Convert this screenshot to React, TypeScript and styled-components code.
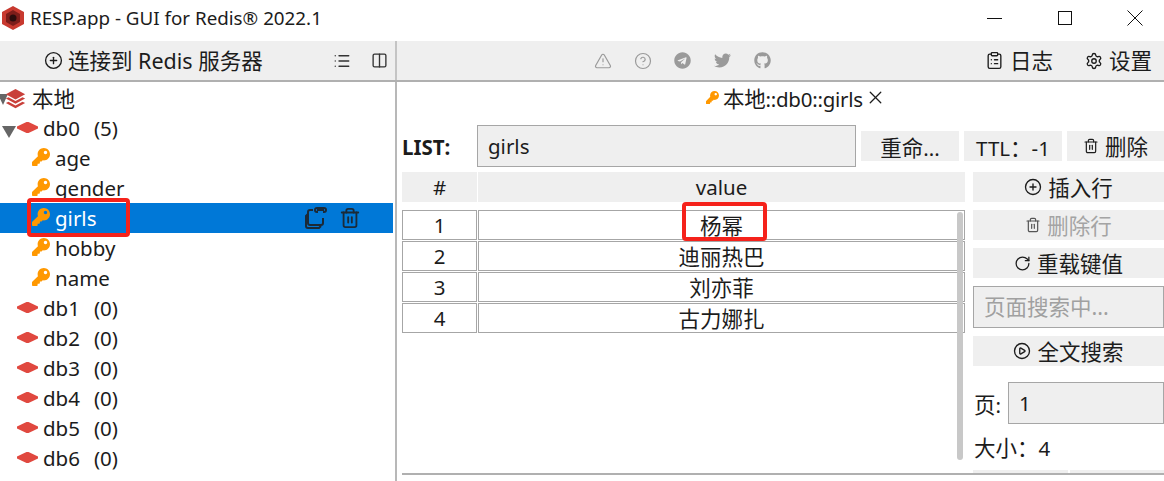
import React from 'react'
import styled, { createGlobalStyle } from 'styled-components'
import {
    CirclePlus,
    List,
    Columns2,
    TriangleAlert,
    CircleHelp,
    ClipboardList,
    Settings,
    Trash2,
    RotateCw,
    CirclePlay,
    X,
} from 'lucide-react'
import { FaGithub, FaKey, FaTelegram, FaTwitter } from 'react-icons/fa'

const FONT = `'Noto Sans', 'Noto Sans CJK SC', sans-serif`

const GlobalStyle = createGlobalStyle`
    html, body {
        margin: 0;
        padding: 0;
        background: #fff;
    }
    * {
        box-sizing: border-box;
    }
`

const Root = styled.div`
    display: flex;
    flex-direction: column;
    width: 1164px;
    height: 481px;
    overflow: hidden;
    font-family: ${FONT};
    font-size: 20.5px;
    color: #1c1c1c;
`

const Cjk = styled.span`
    font-size: 21.5px;
    padding-bottom: 2px;
`

const TitleBar = styled.div`
    display: flex;
    align-items: center;
    height: 41px;
    padding: 0 0 5px 2px;
`

const AppTitle = styled.span`
    margin-left: 6px;
    font-size: 18.8px;
    flex: 1;
`

const WinButton = styled.svg`
    width: 16px;
    height: 16px;
    margin-right: 54px;
    fill: none;
    stroke: #111;
    stroke-width: 1;
    &:last-child {
        margin-right: 21px;
    }
`

const Toolbar = styled.div`
    display: flex;
    height: 41px;
    background: #efefef;
    border-bottom: 2px solid #b0b0b0;
`

const ToolLeft = styled.div`
    display: flex;
    align-items: center;
    width: 397px;
    flex: none;
    padding-left: 44px;
    border-right: 2px solid #c4c4c4;
`

const ConnectLabel = styled.span`
    margin-left: 5px;
    width: 265px;
    padding-bottom: 2px;
    font-size: 21.5px;
    white-space: pre;
`

const ToolIcon = styled.span<{ $gap?: number; $muted?: boolean }>`
    display: inline-flex;
    margin-left: ${(p) => p.$gap ?? 0}px;
    color: ${(p) => (p.$muted ? '#9a9a9a' : '#333')};
`

const ToolRight = styled.div`
    display: flex;
    align-items: center;
    flex: 1;
    padding-left: 197px;
`

const ToolLink = styled.span<{ $gap: number }>`
    display: inline-flex;
    align-items: center;
    gap: 6px;
    margin-left: ${(p) => p.$gap}px;
`

const Body = styled.div`
    display: flex;
    flex: 1;
    min-height: 0;
`

const Sidebar = styled.div`
    width: 397px;
    flex: none;
    padding-top: 1px;
    overflow: hidden;
    border-right: 2px solid #b8b8b8;
`

const TreeRow = styled.div<{ $indent: number; $selected?: boolean }>`
    position: relative;
    display: flex;
    align-items: center;
    width: 393px;
    height: 30px;
    padding-left: ${(p) => p.$indent}px;
    white-space: pre;
    background: ${(p) => (p.$selected ? '#0078d7' : 'transparent')};
    color: ${(p) => (p.$selected ? '#fff' : 'inherit')};
`

const DbCount = styled.span`
    margin-left: 14px;
`

const Arrow = styled.i<{ $left: number; $top: number; $size: number; $height: number }>`
    position: absolute;
    left: ${(p) => p.$left}px;
    top: ${(p) => p.$top}px;
    border-left: ${(p) => p.$size}px solid transparent;
    border-right: ${(p) => p.$size}px solid transparent;
    border-top: ${(p) => p.$height}px solid #666;
`

const KeyIcon = styled(FaKey)<{ $size?: number }>`
    flex: none;
    color: #ff9800;
    width: ${(p) => p.$size ?? 18}px;
    height: ${(p) => p.$size ?? 18}px;
`

const TreeKey = styled(KeyIcon)`
    margin: -2px 5px 0 0;
`

const DbIcon = styled.svg`
    flex: none;
    width: 21px;
    height: 11px;
    margin: -2px 5px 0 0;
    fill: #e0483f;
`

const StackIcon = styled.svg`
    position: absolute;
    left: 5px;
    top: 5px;
    width: 21px;
    height: 21px;
    fill: #c9403a;
`

const RowActions = styled.span`
    display: flex;
    align-items: center;
    gap: 11px;
    margin-left: auto;
    padding-right: 32px;
    color: #1b2a38;
`

const Marker = styled.span`
    position: absolute;
    border: 4px solid #f5221b;
    border-radius: 4px;
    pointer-events: none;
`

const KeyMarker = styled(Marker)`
    left: 27px;
    top: -5px;
    width: 103px;
    height: 39px;
`

const CellMarker = styled(Marker)`
    left: 203px;
    top: -9px;
    width: 85px;
    height: 39px;
`

const Main = styled.div`
    display: flex;
    flex-direction: column;
    flex: 1;
    min-width: 0;
    padding: 0 0 6px 5px;
`

const TabRow = styled.div`
    display: flex;
    align-items: center;
    height: 43px;
    padding: 0 0 13px 304px;
    letter-spacing: -0.25px;
`

const TabText = styled.span`
    margin: 0 2px 0 4px;
`

const KeyRow = styled.div`
    display: flex;
    align-items: center;
    height: 42px;
`

const TypeLabel = styled.b`
    width: 75px;
    flex: none;
    padding-top: 2px;
    font-size: 20.5px;
`

const Field = styled.input<{ $width?: number }>`
    display: block;
    width: ${(p) => (p.$width ? `${p.$width}px` : '100%')};
    height: 42px;
    flex: none;
    padding: 0 0 0 10px;
    border: 1px solid #a6a6a6;
    border-radius: 0;
    outline: none;
    background: #efefef;
    color: #1c1c1c;
    font: 20.5px ${FONT};
    &::placeholder {
        color: #a0a0a0;
        opacity: 1;
        font-size: 21.5px;
    }
`

const Button = styled.div<{ $width?: number; $disabled?: boolean; $gap?: number }>`
    display: flex;
    align-items: center;
    justify-content: center;
    gap: 6px;
    flex: none;
    width: ${(p) => (p.$width ? `${p.$width}px` : '100%')};
    height: 30px;
    margin-left: ${(p) => p.$gap ?? 0}px;
    background: #efefef;
    white-space: nowrap;
    color: ${(p) => (p.$disabled ? '#a4a4a4' : 'inherit')};
`

const Content = styled.div`
    display: flex;
    flex: 1;
    min-height: 0;
    margin-top: 5px;
    border-bottom: 2px solid #b0b0b0;
`

const TablePane = styled.div`
    position: relative;
    width: 563px;
    flex: none;
    margin-right: 8px;
`

const TableRow = styled.div`
    display: grid;
    grid-template-columns: 75px 487px;
    gap: 1px;
    margin-bottom: 1px;
`

const HeadRow = styled(TableRow)`
    margin-bottom: 8px;
`

const HeadCell = styled.div`
    display: flex;
    align-items: center;
    justify-content: center;
    height: 30px;
    background: #efefef;
`

const Cell = styled.div`
    position: relative;
    display: flex;
    align-items: center;
    justify-content: center;
    height: 30px;
    border: 1px solid #a6a6a6;
`

const Scrollbar = styled.div`
    position: absolute;
    right: 2px;
    top: 40px;
    width: 6px;
    height: 248px;
    border-radius: 3px;
    background: #c8c8c8;
`

const SidePane = styled.div`
    display: flex;
    flex-direction: column;
    gap: 8px;
    flex: 1;
    min-width: 0;
    overflow: hidden;
`

const PageRow = styled.div`
    display: flex;
    align-items: center;
    justify-content: space-between;
    margin-top: 8px;
    padding-left: 1px;
`

const SizeRow = styled.div`
    display: flex;
    flex: none;
    align-items: center;
    height: 30px;
    margin-top: 1px;
    padding: 0 0 4px 1px;
`

const PeekRow = styled.div`
    display: flex;
    flex: none;
    gap: 2px;
    margin-top: -1px;
`

const PeekButton = styled.div`
    flex: 1;
    height: 30px;
    background: #efefef;
`

const dbs = ['db1', 'db2', 'db3', 'db4', 'db5', 'db6', 'db7']
const keys = ['age', 'gender', 'girls', 'hobby', 'name']
const values = ['杨幂', '迪丽热巴', '刘亦菲', '古力娜扎']

const DbGlyph = () => (
    <DbIcon viewBox="0 0 21 11">
        <path d="M9.5 0h2L21 4.5v2L11.5 11h-2L0 6.5v-2Z" />
    </DbIcon>
)

const App = () => {
    return (
        <Root>
            <GlobalStyle />
            <TitleBar>
                <svg width="22" height="24" viewBox="0 0 22 24">
                    <path d="M11 0 22 6v12l-11 6L0 18V6Z" fill="#c8392f" />
                    <path d="M11 4 18 8v8l-7 4-7-4V8Z" fill="#7d1d1a" />
                    <circle cx="11" cy="12" r="3.5" fill="#2c0d0d" />
                </svg>
                <AppTitle>RESP.app - GUI for Redis® 2022.1</AppTitle>
                <WinButton viewBox="0 0 16 16">
                    <path d="M0 8.5h15" />
                </WinButton>
                <WinButton viewBox="0 0 16 16">
                    <rect x="1.5" y="1.5" width="13" height="13" />
                </WinButton>
                <WinButton viewBox="0 0 16 16">
                    <path d="M.5.5l15 15M15.5.5l-15 15" />
                </WinButton>
            </TitleBar>

            <Toolbar>
                <ToolLeft>
                    <CirclePlus size={19} strokeWidth={1.7} />
                    <ConnectLabel>连接到 Redis 服务器</ConnectLabel>
                    <ToolIcon>
                        <List size={18} strokeWidth={1.8} />
                    </ToolIcon>
                    <ToolIcon $gap={20}>
                        <Columns2 size={17} strokeWidth={1.9} />
                    </ToolIcon>
                </ToolLeft>
                <ToolRight>
                    <ToolIcon $muted>
                        <TriangleAlert size={18} strokeWidth={1.6} />
                    </ToolIcon>
                    <ToolIcon $muted $gap={22}>
                        <CircleHelp size={18} strokeWidth={1.6} />
                    </ToolIcon>
                    <ToolIcon $muted $gap={22}>
                        <FaTelegram size={17} />
                    </ToolIcon>
                    <ToolIcon $muted $gap={23}>
                        <FaTwitter size={17} />
                    </ToolIcon>
                    <ToolIcon $muted $gap={23}>
                        <FaGithub size={17} />
                    </ToolIcon>
                    <ToolLink $gap={214}>
                        <ClipboardList size={19} strokeWidth={1.7} />
                        <Cjk>日志</Cjk>
                    </ToolLink>
                    <ToolLink $gap={32}>
                        <Settings size={18} strokeWidth={1.8} />
                        <Cjk>设置</Cjk>
                    </ToolLink>
                </ToolRight>
            </Toolbar>

            <Body>
                <Sidebar>
                    <TreeRow $indent={32}>
                        <Arrow $left={-2} $top={11} $size={5} $height={11} />
                        <StackIcon viewBox="0 0 24 24">
                            <path d="M12 1 23 7l-11 6L1 7Z" />
                            <path d="M4 10.5l8 4.4 8-4.4 3 1.6-11 6-11-6Z" />
                            <path d="M4 15.6l8 4.4 8-4.4 3 1.6-11 6-11-6Z" />
                        </StackIcon>
                        <Cjk>本地</Cjk>
                    </TreeRow>
                    <TreeRow $indent={17}>
                        <Arrow $left={2} $top={13} $size={7} $height={12} />
                        <DbGlyph />
                        db0
                        <DbCount>(5)</DbCount>
                    </TreeRow>
                    {keys.map((name) => {
                        const selected = name === 'girls'
                        return (
                            <TreeRow key={name} $indent={32} $selected={selected}>
                                <TreeKey />
                                {name}
                                {selected && (
                                    <>
                                        <KeyMarker />
                                        <RowActions>
                                            <svg
                                                width="24"
                                                height="24"
                                                viewBox="0 0 24 24"
                                                fill="none"
                                                stroke="currentColor"
                                                strokeWidth="2"
                                            >
                                                <path d="M9 4H6a2 2 0 0 0-2 2v11a2 2 0 0 0 2 2h11a2 2 0 0 0 2-2v-5" />
                                                <path d="M4 8 2 10v10a2 2 0 0 0 2 2h11l2-2" />
                                                <path d="M14 6h-1a2 2 0 0 1 0-4h7a2 2 0 0 1 0 4h-1M13 4h7" />
                                            </svg>
                                            <Trash2 size={22} strokeWidth={2} />
                                        </RowActions>
                                    </>
                                )}
                            </TreeRow>
                        )
                    })}
                    {dbs.map((name) => (
                        <TreeRow key={name} $indent={17}>
                            <DbGlyph />
                            {name}
                            <DbCount>(0)</DbCount>
                        </TreeRow>
                    ))}
                </Sidebar>

                <Main>
                    <TabRow>
                        <KeyIcon $size={13} />
                        <TabText>
                            <Cjk>本地</Cjk>::db0::girls
                        </TabText>
                        <X size={21} strokeWidth={1.5} />
                    </TabRow>
                    <KeyRow>
                        <TypeLabel>LIST:</TypeLabel>
                        <Field $width={379} readOnly value="girls" />
                        <Button $width={98} $gap={5}>
                            <span>
                                <Cjk>重命</Cjk>...
                            </span>
                        </Button>
                        <Button $width={98} $gap={5}>
                            <span>
                                TTL<Cjk>：</Cjk>-1
                            </span>
                        </Button>
                        <Button $width={97} $gap={5}>
                            <Trash2 size={16} strokeWidth={1.8} />
                            <Cjk>删除</Cjk>
                        </Button>
                    </KeyRow>
                    <Content>
                        <TablePane>
                            <HeadRow>
                                <HeadCell>#</HeadCell>
                                <HeadCell>value</HeadCell>
                            </HeadRow>
                            {values.map((value, i) => (
                                <TableRow key={value}>
                                    <Cell>{i + 1}</Cell>
                                    <Cell>
                                        <Cjk>{value}</Cjk>
                                        {i === 0 && <CellMarker />}
                                    </Cell>
                                </TableRow>
                            ))}
                            <Scrollbar />
                        </TablePane>
                        <SidePane>
                            <Button>
                                <CirclePlus size={18} strokeWidth={1.8} />
                                <Cjk>插入行</Cjk>
                            </Button>
                            <Button $disabled>
                                <Trash2 size={16} strokeWidth={1.8} color="#555" />
                                <Cjk>删除行</Cjk>
                            </Button>
                            <Button>
                                <RotateCw size={17} strokeWidth={1.8} />
                                <Cjk>重载键值</Cjk>
                            </Button>
                            <Field placeholder="页面搜索中..." readOnly />
                            <Button>
                                <CirclePlay size={18} strokeWidth={1.8} />
                                <Cjk>全文搜索</Cjk>
                            </Button>
                            <PageRow>
                                <span>
                                    <Cjk>页</Cjk>:
                                </span>
                                <Field $width={156} readOnly value="1" />
                            </PageRow>
                            <SizeRow>
                                <span>
                                    <Cjk>大小：</Cjk>4
                                </span>
                            </SizeRow>
                            <PeekRow>
                                <PeekButton />
                                <PeekButton />
                            </PeekRow>
                        </SidePane>
                    </Content>
                </Main>
            </Body>
        </Root>
    )
}

export default App
